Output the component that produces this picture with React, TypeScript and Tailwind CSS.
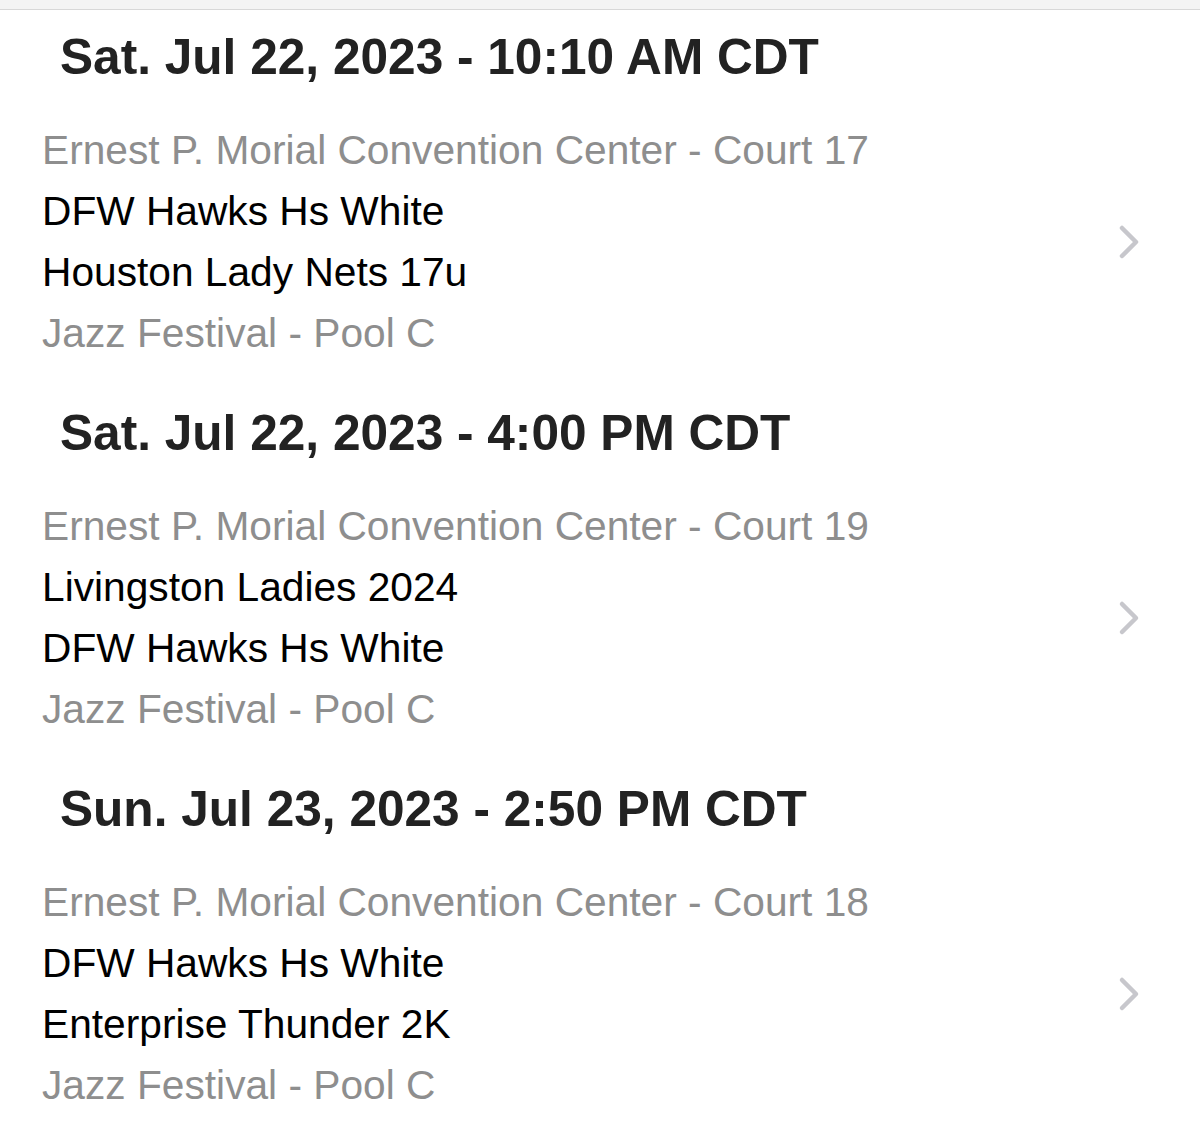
import { Fragment } from 'react';

type Game = {
  when: string;
  court: string;
  home: string;
  away: string;
  pool: string;
};

const games: Game[] = [
  {
    when: 'Sat. Jul 22, 2023 - 10:10 AM CDT',
    court: 'Ernest P. Morial Convention Center - Court 17',
    home: 'DFW Hawks Hs White',
    away: 'Houston Lady Nets 17u',
    pool: 'Jazz Festival - Pool C',
  },
  {
    when: 'Sat. Jul 22, 2023 - 4:00 PM CDT',
    court: 'Ernest P. Morial Convention Center - Court 19',
    home: 'Livingston Ladies 2024',
    away: 'DFW Hawks Hs White',
    pool: 'Jazz Festival - Pool C',
  },
  {
    when: 'Sun. Jul 23, 2023 - 2:50 PM CDT',
    court: 'Ernest P. Morial Convention Center - Court 18',
    home: 'DFW Hawks Hs White',
    away: 'Enterprise Thunder 2K',
    pool: 'Jazz Festival - Pool C',
  },
];

function Chevron() {
  return (
    <svg width="22" height="36" viewBox="0 0 22 36" fill="none" className="shrink-0">
      <path
        d="M4 4 L18 18 L4 32"
        stroke="#c7c7cc"
        strokeWidth="4.5"
        strokeLinecap="round"
        strokeLinejoin="round"
      />
    </svg>
  );
}

export default function App() {
  return (
    <div className="min-h-[1138px] bg-white font-['Liberation_Sans',Arial,sans-serif]">
      {/* top bar */}
      <div className="h-[10px] bg-[#f4f4f4] border-b border-[#d8d8d8]" />

      <div className="pt-[17px]">
        {games.map((g, i) => (
          <Fragment key={i}>
            {/* date header */}
            <div className="h-[60px] pl-[60px] text-[49.6px] leading-[60px] font-bold text-[#222222] whitespace-nowrap">
              {g.when}
            </div>

            {/* game row */}
            <div className="mt-[33px] mb-[39px] flex items-center justify-between pl-[42px] pr-[60px]">
              <div className="text-[40.7px] leading-[61px] whitespace-nowrap">
                <div className="text-[#8e8e8e]">{g.court}</div>
                <div className="text-black">{g.home}</div>
                <div className="text-black">{g.away}</div>
                <div className="text-[#8e8e8e]">{g.pool}</div>
              </div>
              <Chevron />
            </div>
          </Fragment>
        ))}
      </div>
    </div>
  );
}
